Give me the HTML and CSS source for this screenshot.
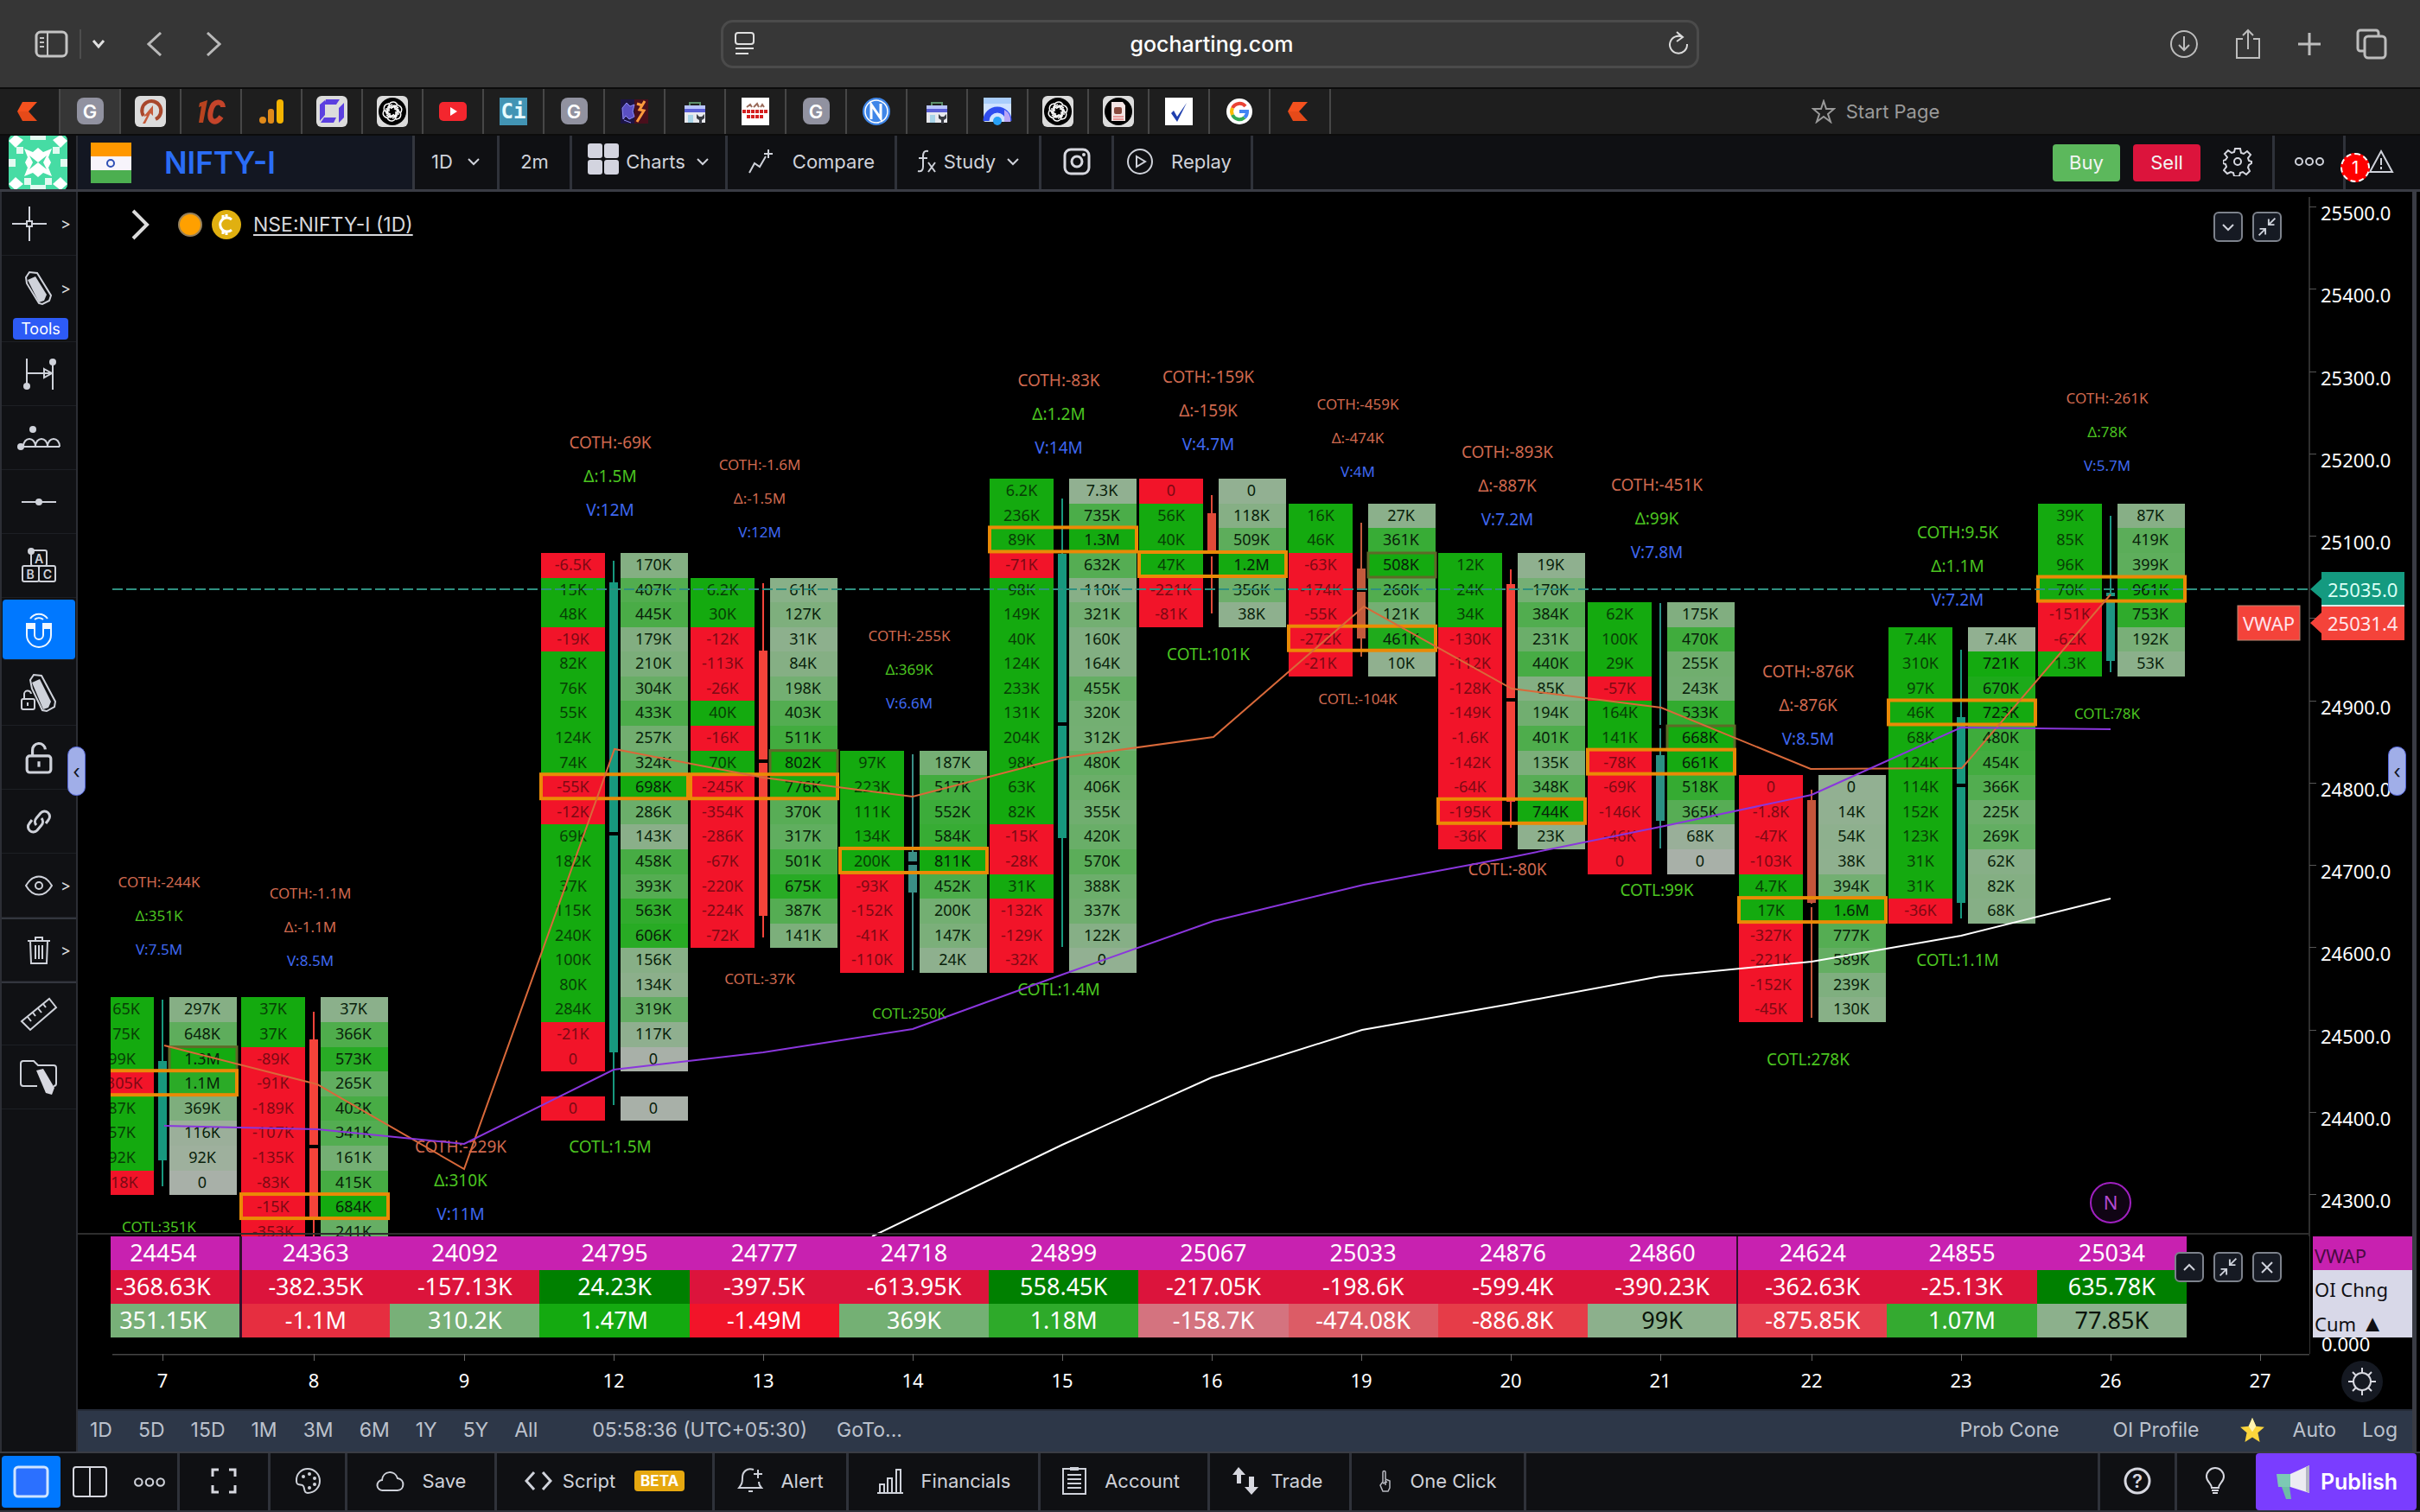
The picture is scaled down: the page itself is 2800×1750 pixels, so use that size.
FILE: index.html
```html
<!DOCTYPE html>
<html lang="en">
<head>
<meta charset="utf-8">
<title>NIFTY-I footprint chart</title>
<link rel="stylesheet" href="styles.css">
</head>
<body>
<svg class="defs" aria-hidden="true">
  <symbol id="i-kite" viewBox="0 0 36 36"><path d="M10 7h17L17 18H4z" fill="#f4511e"/><path d="M4 18h13l10 11H10z" fill="#e64a19"/></symbol>
  <symbol id="i-g" viewBox="0 0 36 36"><rect x="3" y="2" width="31" height="31" rx="8" fill="#9192a0"/><text x="18" y="26" text-anchor="middle" font-size="22" font-weight="600" fill="#fff">G</text></symbol>
  <symbol id="i-ai" viewBox="0 0 36 36"><rect width="36" height="36" rx="6" fill="#dcdcdc"/><circle cx="18" cy="18" r="16" fill="#000"/><g fill="none" stroke="#fff" stroke-width="1.5"><path id="petal" d="M14 18v-6a5 5 0 0 1 9-3l1 1M14 14l6-3 5 3"/><use href="#petal" transform="rotate(60 18 18)"/><use href="#petal" transform="rotate(120 18 18)"/><use href="#petal" transform="rotate(180 18 18)"/><use href="#petal" transform="rotate(240 18 18)"/><use href="#petal" transform="rotate(300 18 18)"/></g></symbol>
  <symbol id="i-box" viewBox="0 0 36 36"><path d="M12 11V8h12v3" fill="none" stroke="#5d8f6a" stroke-width="2"/><rect x="6" y="11" width="24" height="5" fill="#b9c4ff"/><path d="M6 15h24v16H6z" fill="#e8e9ee"/><path d="M6 15h24v4H6z" fill="#5b5fd6"/><path d="M10 22h6v9h-6z" fill="#a8d4e8"/><path d="M20 21v5l3 2v4h3v-4l3-2v-5l-3 3h-3z" fill="#3a3d45"/></symbol>
  <symbol id="i-min" viewBox="0 0 34 35"><path d="M27 7L19 15m0-7v7h7M7 28l8-8m-7 0h7v7" fill="none" stroke="#cfd3dc" stroke-width="2"/></symbol>
  <symbol id="i-chev" viewBox="0 0 16 12"><path d="M2 3l6 6 6-6" fill="none" stroke="#cfd2da" stroke-width="2"/></symbol>
  <symbol id="i-more" viewBox="0 0 36 14"><g fill="none" stroke="#cfd2da" stroke-width="2"><circle cx="6" cy="7" r="4"/><circle cx="18" cy="7" r="4"/><circle cx="30" cy="7" r="4"/></g></symbol>
  <symbol id="i-pen" viewBox="0 0 44 44"><path d="M7 9l4-6 9 1 16 26-2 6-8 4-4-1L8 16z" fill="none" stroke="#cfd2da" stroke-width="2"/><path d="M9 12l9-4 13 21-3 7-6 2z" fill="#cfd2da"/></symbol>
  <symbol id="i-lock" viewBox="0 0 32 36"><path d="M9 16v-6a7 7 0 0 1 14-1" fill="none" stroke="#cfd2da" stroke-width="3"/><rect x="3" y="16" width="26" height="18" rx="3" fill="none" stroke="#cfd2da" stroke-width="3"/><path d="M16 22v6" stroke="#cfd2da" stroke-width="3"/></symbol>
</svg>

<header class="browser-bar">
  <div class="browser-nav">
    <button class="plain" aria-label="Sidebar"><svg width="40" height="34" viewBox="0 0 40 34"><g fill="none" stroke="#c4c4c4" stroke-width="3"><rect x="2" y="3" width="35" height="28" rx="5"/><path d="M15 3v28M6 10h5M6 15h5M6 20h5" stroke-width="2"/></g></svg></button>
    <span class="nav-rule"></span>
    <button class="plain" aria-label="Tab groups"><svg width="16" height="12" viewBox="0 0 16 12"><path d="M2 2l6 7 6-7" fill="none" stroke="#e0e0e0" stroke-width="3"/></svg></button>
    <button class="plain back" aria-label="Back"><svg width="18" height="28" viewBox="0 0 18 28"><path d="M16 1L2 14l14 13" fill="none" stroke="#b9b9b9" stroke-width="3"/></svg></button>
    <button class="plain fwd" aria-label="Forward"><svg width="18" height="28" viewBox="0 0 18 28"><path d="M2 1l14 13L2 27" fill="none" stroke="#b9b9b9" stroke-width="3"/></svg></button>
  </div>
  <div class="address">
    <svg width="26" height="30" viewBox="0 0 26 30"><g fill="none" stroke="#e0e0e0" stroke-width="2"><rect x="2" y="2" width="21" height="13" rx="3"/><path d="M2 20h21M2 26h15"/></g></svg>
    <input type="text" value="gocharting.com" aria-label="Address">
    <button class="plain" aria-label="Reload"><svg width="26" height="30" viewBox="0 0 26 30"><path d="M18 7a10 10 0 1 0 5 8M11 1l7 6-7 5" fill="none" stroke="#dcdcdc" stroke-width="2"/></svg></button>
  </div>
  <div class="browser-actions">
    <button class="plain" aria-label="Downloads"><svg width="36" height="36" viewBox="0 0 36 36"><g fill="none" stroke="#bdbdbd" stroke-width="2"><circle cx="18" cy="18" r="15"/><path d="M18 9v16m-6-6l6 6 6-6"/></g></svg></button>
    <button class="plain" aria-label="Share"><svg width="36" height="40" viewBox="0 0 36 40"><g fill="none" stroke="#bdbdbd" stroke-width="2"><path d="M12 14H5v22h26V14h-7M18 26V4m-6 6l6-6 6 6"/></g></svg></button>
    <button class="plain" aria-label="New tab"><svg width="30" height="30" viewBox="0 0 30 30"><path d="M15 2v26M2 15h26" stroke="#bdbdbd" stroke-width="3"/></svg></button>
    <button class="plain" aria-label="Tab overview"><svg width="38" height="38" viewBox="0 0 38 38"><g fill="none" stroke="#bdbdbd" stroke-width="3"><path d="M11 27H6a3 3 0 0 1-3-3V6a3 3 0 0 1 3-3h18a3 3 0 0 1 3 3v4"/><rect x="11" y="10" width="24" height="25" rx="4"/></g></svg></button>
  </div>
</header>

<nav class="tabs">
  <a href="#" aria-label="Kite"><svg><use href="#i-kite"/></svg></a>
  <a href="#" class="current" aria-label="GoCharting"><svg><use href="#i-g"/></svg></a>
  <a href="#" aria-label="Tab"><svg viewBox="0 0 36 36"><rect width="36" height="36" rx="6" fill="#dcdcdc"/><path d="M10 23a11 11 0 1 1 14 4" fill="none" stroke="#a8472c" stroke-width="4"/><path d="M9 32l5-9-4 1 11-13v12l-3-3-6 12z" fill="#c65a3a"/></svg></a>
  <a href="#" aria-label="Tab"><svg viewBox="0 0 36 36"><path d="M5 8l9-3-5 26H4l3-19-3 1z" fill="#b8431f"/><path d="M32 13c0-7-11-9-14 4s5 17 12 7" fill="none" stroke="#c4442a" stroke-width="6"/></svg></a>
  <a href="#" aria-label="Analytics"><svg viewBox="0 0 36 36"><rect x="24" y="4" width="8" height="28" rx="4" fill="#f4b400"/><rect x="14" y="15" width="7" height="17" rx="3" fill="#e08a1a"/><circle cx="8" cy="28" r="4" fill="#e08a1a"/></svg></a>
  <a href="#" aria-label="Tab"><svg viewBox="0 0 36 36"><rect width="36" height="36" rx="6" fill="#dcdcdc"/><path d="M11 4h16l-4 6H9zM4 10l6-5v17l-6 7zM26 14l6-6v17l-6 6zM9 25h14l-3 6H5z" fill="#5b3fe0"/></svg></a>
  <a href="#" aria-label="ChatGPT"><svg><use href="#i-ai"/></svg></a>
  <a href="#" aria-label="YouTube"><svg viewBox="0 0 36 36"><rect x="2" y="7" width="32" height="22" rx="5" fill="#f4262e"/><path d="M15 13l8 5-8 5z" fill="#fff"/></svg></a>
  <a href="#" aria-label="Tab"><svg viewBox="0 0 36 36"><rect x="2" y="2" width="32" height="32" fill="#4294b4"/><text class="mono" x="18" y="26" text-anchor="middle" font-size="24" font-weight="700" fill="#e8fbff">Ci</text></svg></a>
  <a href="#" aria-label="GoCharting"><svg><use href="#i-g"/></svg></a>
  <a href="#" aria-label="Tab"><svg viewBox="0 0 36 36"><rect x="2" y="4" width="32" height="28" fill="#1c1445"/><rect x="18" y="4" width="16" height="28" fill="#4a0f1c"/><path d="M4 14l5-6 4 4 5-2-2 8 2 6-6 3-4-4-3 4zM6 28l8 3" stroke="#8f8cf5" fill="#5a4fc4"/><path d="M30 6l-6 10 5 1-8 13M21 9l6 2" fill="none" stroke="#ff9a3c" stroke-width="3"/></svg></a>
  <a href="#" aria-label="Toolbox"><svg><use href="#i-box"/></svg></a>
  <a href="#" aria-label="Tab"><svg viewBox="0 0 36 36"><rect x="2" y="2" width="32" height="32" fill="#fff"/><path d="M8 13l4-3 2 3M16 13l4-4 2 4M24 13l2-3 2 3" fill="none" stroke="#9a6a5a" stroke-width="2"/><path d="M3 18h30M8 24h20" stroke="#d42020" stroke-width="4" stroke-dasharray="4 1"/></svg></a>
  <a href="#" aria-label="GoCharting"><svg><use href="#i-g"/></svg></a>
  <a href="#" aria-label="Tab"><svg viewBox="0 0 36 36"><circle cx="18" cy="18" r="16" fill="#3f86e8"/><circle cx="18" cy="18" r="13" fill="none" stroke="#fff" stroke-width="1.5"/><path d="M12 27V10l11 16V9" fill="none" stroke="#fff" stroke-width="3"/></svg></a>
  <a href="#" aria-label="Toolbox"><svg><use href="#i-box"/></svg></a>
  <a href="#" aria-label="Tab"><svg viewBox="0 0 36 36"><rect x="2" y="2" width="32" height="28" rx="2" fill="#cfe2ff"/><path d="M2 2h32v7H2z" fill="#a9cdfb"/><path d="M5 29a13 13 0 0 1 26 0" fill="none" stroke="#2f4df0" stroke-width="7"/><path d="M26 16a14 14 0 0 1 7 14h-7z" fill="#b9a6f5"/><circle cx="18" cy="29" r="5" fill="#27a0f5"/></svg></a>
  <a href="#" aria-label="ChatGPT"><svg><use href="#i-ai"/></svg></a>
  <a href="#" aria-label="Tab"><svg viewBox="0 0 36 36"><rect width="36" height="36" rx="6" fill="#dcdcdc"/><circle cx="18" cy="18" r="16" fill="#000"/><path d="M10 7h13l3 4v18H10z" fill="#f3e4e4"/><rect x="13" y="13" width="9" height="8" rx="2" fill="#8a4a3e"/><path d="M12 24h12M12 27h12" stroke="#e05050"/></svg></a>
  <a href="#" aria-label="Tab"><svg viewBox="0 0 36 36"><rect x="2" y="2" width="32" height="32" fill="#fff"/><path d="M9 20l3-3 4 7L27 8 16 30z" fill="#1f3fae"/></svg></a>
  <a href="#" aria-label="Google"><svg viewBox="0 0 36 36"><circle cx="18" cy="18" r="15" fill="#fff"/><g fill="none" stroke-width="4"><path d="M10 14a9 9 0 0 1 15-2" stroke="#ea4335"/><path d="M10 22a9 9 0 0 1 0-8" stroke="#fbbc05"/><path d="M10 22a9 9 0 0 0 14 3" stroke="#34a853"/><path d="M24 25a9 9 0 0 0 3-7h-9" stroke="#4285f4"/></g></svg></a>
  <a href="#" aria-label="Kite"><svg><use href="#i-kite"/></svg></a>
  <a href="#" class="start"><svg viewBox="0 0 28 28"><path d="M14 2l3 9h9l-7 6 3 9-8-6-8 6 3-9-7-6h9z" fill="none" stroke="#9a9a9a" stroke-width="2"/></svg>Start Page</a>
</nav>

<div class="topbar">
  <div class="avatar"><svg width="68" height="64" viewBox="0 0 68 64"><rect width="68" height="64" rx="6" fill="#46dca4"/><g fill="#fff"><path d="M8 0l9 6-9 9-8-8zM60 0l8 7-8 8-9-9zM8 49l9 8-9 7-8-7zM60 49l8 8-8 7-9-7z"/><path d="M18 16l10 4 6-5 6 5 10-4-4 10 3 6-3 6 4 10-10-4-6 5-6-5-10 4 4-10-3-6 3-6z"/><path d="M25 0h18v6H25zM25 58h18v6H25zM0 28h8v9H0zM60 28h8v9h-8zM9 14h8v8H9zM51 14h8v8h-8zM18 50h8v8h-8zM42 50h8v8h-8z" opacity=".85"/></g><path d="M34 32l-10-8 4 8-4 8zM34 32l10-8-4 8 4 8z" fill="#46dca4"/></svg></div>
  <div class="symbol-cell">
    <svg width="47" height="47" viewBox="0 0 47 47"><path d="M0 0h47v16H0z" fill="#ff9800"/><path d="M0 16h47v16H0z" fill="#f7f4fb"/><path d="M0 32h47v15H0z" fill="#4caf50"/><circle cx="23" cy="24" r="4" fill="none" stroke="#2e4fb5" stroke-width="2"/></svg>
    <button class="symbol">NIFTY-I</button>
  </div>
  <button class="cell w98">1D <svg class="chev"><use href="#i-chev"/></svg></button>
  <button class="cell w84">2m</button>
  <button class="cell w180"><svg class="up" width="36" height="36" viewBox="0 0 36 36"><g fill="#d3d4df"><rect width="17" height="17" rx="3"/><rect x="19" width="17" height="17" rx="3"/><rect y="19" width="17" height="17" rx="3"/><rect x="19" y="19" width="17" height="17" rx="3"/></g></svg><span>Charts</span> <svg class="chev"><use href="#i-chev"/></svg></button>
  <button class="cell w196"><svg width="32" height="32" viewBox="0 0 32 32"><path d="M2 29l6-11 6 4 7-12M24 2v10M19 7h10" fill="none" stroke="#cfd2da" stroke-width="2"/></svg><span class="gap">Compare</span></button>
  <button class="cell w167"><svg width="24" height="28" viewBox="0 0 24 28"><path d="M14 2c-5-1-6 2-6 6v12c0 4-2 6-6 5M3 10h10M14 15l8 11M22 15l-8 11" fill="none" stroke="#cfd2da" stroke-width="2"/></svg><span>Study</span> <svg class="chev"><use href="#i-chev"/></svg></button>
  <button class="cell w84" aria-label="Snapshot"><svg width="34" height="34" viewBox="0 0 34 34"><g fill="none" stroke="#d7d8e0" stroke-width="3"><rect x="3" y="3" width="28" height="28" rx="7"/><circle cx="17" cy="17" r="6"/></g><circle cx="25" cy="9" r="2" fill="#d7d8e0"/></svg></button>
  <button class="cell w161"><svg width="32" height="32" viewBox="0 0 32 32"><circle cx="16" cy="16" r="14" fill="none" stroke="#cfd2da" stroke-width="2"/><path d="M12 10l10 6-10 6z" fill="none" stroke="#cfd2da" stroke-width="2"/></svg><span class="gap">Replay</span></button>
  <div class="spacer"></div>
  <button class="trade buy">Buy</button>
  <button class="trade sell">Sell</button>
  <button class="cell w84" aria-label="Settings"><svg width="34" height="34" viewBox="0 0 34 34"><g fill="none" stroke="#d7d8e0" stroke-width="2"><path d="M14 2h6l1 5 3 1 4-3 4 4-3 4 1 3 3 1v2l-3 2-1 3 2 4-4 4-4-3-3 1-1 4h-6l-1-4-3-1-4 2-4-4 3-4-1-3-3-1v-3l3-1 2-3-3-4 4-4 4 3 3-1z"/><circle cx="17" cy="17" r="4"/></g></svg></button>
  <button class="cell w82" aria-label="More"><svg width="36" height="14"><use href="#i-more"/></svg></button>
  <button class="cell w82 warn" aria-label="Warnings"><svg width="32" height="30" viewBox="0 0 32 30"><path d="M16 3l13 24H3z" fill="none" stroke="#cfd2da" stroke-width="2"/><path d="M16 11v8M16 21v3" stroke="#cfd2da" stroke-width="2"/></svg><b class="badge">1</b></button>
</div>

<main class="workspace">
  <aside class="rail">
    <button class="cursor" aria-label="Cursor"><svg width="40" height="40" viewBox="0 0 40 40"><path d="M0 20h16M24 20h16M20 0v16M20 24v16" stroke="#cfd2da" stroke-width="2"/><rect x="17" y="17" width="6" height="6" fill="none" stroke="#cfd2da" stroke-width="2"/></svg><i>&gt;</i></button>
    <button class="tall"><svg width="44" height="44"><use href="#i-pen"/></svg><i>&gt;</i><span class="tools">Tools</span></button>
    <button aria-label="Measure"><svg width="44" height="44" viewBox="0 0 44 44"><g stroke="#cfd2da" stroke-width="2" fill="none"><path d="M8 4v30M38 8v32M8 21h28M28 16l9 5-9 5z"/></g><circle cx="8" cy="36" r="4" fill="#cfd2da"/><circle cx="38" cy="8" r="4" fill="#cfd2da"/></svg></button>
    <button aria-label="Cycles"><svg width="52" height="32" viewBox="0 0 52 32"><path d="M6 26h44M8 26c0-12 14-12 14 0 0-12 14-12 14 0 0-12 14-12 14 0" fill="none" stroke="#cfd2da" stroke-width="2"/><circle cx="5" cy="26" r="4" fill="#cfd2da"/><circle cx="19" cy="6" r="4" fill="#cfd2da"/></svg></button>
    <button aria-label="Line"><svg width="40" height="12" viewBox="0 0 40 12"><path d="M0 6h40" stroke="#cfd2da" stroke-width="2"/><circle cx="20" cy="6" r="4" fill="#cfd2da"/></svg></button>
    <button aria-label="Text"><svg width="42" height="44" viewBox="0 0 42 44"><g fill="none" stroke="#cfd2da" stroke-width="2"><rect x="12" y="4" width="18" height="18" rx="2"/><rect x="2" y="22" width="19" height="18" rx="2"/><rect x="21" y="22" width="19" height="18" rx="2"/></g><circle cx="12" cy="5" r="4" fill="#cfd2da"/><g font-size="14" font-weight="600" fill="#cfd2da" text-anchor="middle"><text x="21" y="19">A</text><text x="11" y="37">B</text><text x="31" y="37">C</text></g></svg></button>
    <button class="on" aria-label="Magnet"><svg width="34" height="46" viewBox="0 0 34 46"><g fill="none" stroke="#eef6ff" stroke-width="2"><path d="M3 16v13a14 14 0 0 0 28 0V16h-9v13a5 5 0 0 1-10 0V16zM7 10a12 12 0 0 1 20 0M12 11a8 8 0 0 1 10 0"/></g><path d="M3 16h9v6H3zM22 16h9v6h-9z" fill="#eef6ff"/></svg></button>
    <button aria-label="Lock drawings"><svg width="44" height="48" viewBox="0 0 44 48"><path d="M12 8l4-6 9 1 16 30-1 6-9 5-5-1-12-25z" fill="none" stroke="#cfd2da" stroke-width="2"/><path d="M14 11l9-4 13 26-3 7-6 2z" fill="#cfd2da"/><path d="M5 30v-5a4 4 0 0 1 8-1" fill="none" stroke="#cfd2da" stroke-width="2"/><rect x="2" y="30" width="15" height="12" rx="2" fill="#101114" stroke="#cfd2da" stroke-width="2"/><path d="M9 34v4" stroke="#cfd2da" stroke-width="2"/></svg></button>
    <button aria-label="Lock"><svg width="34" height="42"><use href="#i-lock"/></svg></button>
    <button aria-label="Link"><svg width="32" height="32" viewBox="0 0 32 32"><g fill="none" stroke="#cfd2da" stroke-width="3"><path d="M13 20a6 6 0 0 1 0-8l5-6a6 6 0 0 1 9 8l-3 4"/><path d="M19 12a6 6 0 0 1 0 8l-5 6a6 6 0 0 1-9-8l3-4"/></g></svg></button>
    <button aria-label="Visibility"><svg width="34" height="28" viewBox="0 0 34 28"><path d="M2 14C10 0 24 0 32 14 24 28 10 28 2 14z" fill="none" stroke="#cfd2da" stroke-width="2"/><circle cx="17" cy="14" r="4" fill="none" stroke="#cfd2da" stroke-width="2"/></svg><i>&gt;</i></button>
    <button class="ruled" aria-label="Delete"><svg width="30" height="34" viewBox="0 0 30 34"><path d="M2 6h26M11 6V2h8v4M5 6l1 26h18l1-26M11 11v16M15 11v16M19 11v16" fill="none" stroke="#cfd2da" stroke-width="2"/></svg><i>&gt;</i></button>
    <button class="ruled" aria-label="Ruler"><svg width="44" height="44" viewBox="0 0 44 44"><path d="M2 30L34 4l8 10L12 40zM9 25l4 5M15 20l3 4M21 15l4 5M27 10l3 4" fill="none" stroke="#cfd2da" stroke-width="2"/></svg></button>
    <button aria-label="Templates"><svg width="44" height="44" viewBox="0 0 44 44"><path d="M20 32H4a3 3 0 0 1-3-3V6a3 3 0 0 1 3-3h12l5 5h18a3 3 0 0 1 3 3v18a3 3 0 0 1-3 3" fill="none" stroke="#cfd2da" stroke-width="2"/><path d="M19 14l8-2 13 22-3 8-7-2z" fill="#d7d8e0"/></svg></button>
  </aside>

  <section class="chart">
    <div class="pane">
      <svg id="footprint" viewBox="90 222 2701 1209" role="img" aria-label="Footprint chart"></svg>
      <div class="legend"><svg width="22" height="36" viewBox="0 0 22 36"><path d="M2 2l16 16L2 34" fill="none" stroke="#dcdcdc" stroke-width="4"/></svg><span class="dot"></span><svg class="coin" width="34" height="34" viewBox="0 0 34 34"><circle cx="17" cy="17" r="17" fill="#e0b010"/><path d="M23 11a8 8 0 1 0 0 12M17 5v5M17 24v5M13 6v4M13 24v4" fill="none" stroke="#fff" stroke-width="3"/></svg><a href="#">NSE:NIFTY-I (1D)</a></div>
      <div class="pane-tools top"><button aria-label="Collapse"><svg width="16" height="12"><use href="#i-chev"/></svg></button><button aria-label="Minimize"><svg width="32" height="33"><use href="#i-min"/></svg></button></div>
    </div>
    <div class="data-pane">
      <table>
        <colgroup><col class="first"><col span="13"></colgroup>
        <tr class="vwap"><td>24454</td><td>24363</td><td>24092</td><td>24795</td><td>24777</td><td>24718</td><td>24899</td><td>25067</td><td>25033</td><td>24876</td><td>24860</td><td>24624</td><td>24855</td><td>25034</td></tr>
        <tr class="oi"><td>-368.63K</td><td>-382.35K</td><td>-157.13K</td><td class="pos">24.23K</td><td>-397.5K</td><td>-613.95K</td><td class="pos">558.45K</td><td>-217.05K</td><td>-198.6K</td><td>-599.4K</td><td>-390.23K</td><td>-362.63K</td><td>-25.13K</td><td class="pos">635.78K</td></tr>
        <tr class="cum"><td style="background:#78b078">351.15K</td><td style="background:#e62e40">-1.1M</td><td style="background:#78b078">310.2K</td><td style="background:#14aa10">1.47M</td><td style="background:#f21429">-1.49M</td><td style="background:#74b074">369K</td><td style="background:#2eaa2a">1.18M</td><td style="background:#d4737f">-158.7K</td><td style="background:#dc5c66">-474.08K</td><td style="background:#e63c48">-886.8K</td><td class="dark" style="background:#8cb08c">99K</td><td style="background:#e63e4e">-875.85K</td><td style="background:#34aa30">1.07M</td><td class="dark" style="background:#8cb08c">77.85K</td></tr>
      </table>
      <div class="data-axis"><div class="k1">VWAP</div><div>OI Chng</div><div>Cum <span class="delta">▲</span></div><p>0.000</p></div>
      <div class="pane-tools mid"><button aria-label="Move up"><svg class="flip" width="16" height="12"><use href="#i-chev"/></svg></button><button aria-label="Minimize"><svg width="32" height="33"><use href="#i-min"/></svg></button><button aria-label="Close"><svg width="18" height="18" viewBox="0 0 18 18"><path d="M3 3l12 12M15 3L3 15" stroke="#cfd3dc" stroke-width="2"/></svg></button></div>
    </div>
    <div class="time-axis">
      <svg id="dates" viewBox="90 1567 2701 64" role="img" aria-label="Dates"></svg>
      <button class="theme" aria-label="Theme"><svg width="34" height="34" viewBox="0 0 34 34"><circle cx="17" cy="17" r="10" fill="none" stroke="#d7d8e0" stroke-width="2"/><path d="M17 1v6M17 27v6M1 17h6M27 17h6M6 6l4 4M24 24l4 4M6 28l4-4M24 10l4-4" stroke="#d7d8e0" stroke-width="2"/></svg></button>
    </div>
    <div class="ranges">
      <button>1D</button><button>5D</button><button>15D</button><button>1M</button><button>3M</button><button>6M</button><button>1Y</button><button>5Y</button><button>All</button>
      <button class="clock">05:58:36 (UTC+05:30)</button><button>GoTo...</button>
      <span class="spacer"></span>
      <button class="prob">Prob Cone</button><button>OI Profile</button>
      <svg width="30" height="30" viewBox="0 0 28 28"><path d="M14 1l4 9 9 1-7 6 2 10-8-5-8 5 2-10-7-6 9-1z" fill="#fbd53c"/><path d="M14 1l4 9-4 6-4-6z" fill="#fff3b0"/></svg>
      <button>Auto</button><button>Log</button>
    </div>
    <button class="handle left" aria-label="Collapse tools">&#x2039;</button>
    <button class="handle right" aria-label="Open panel">&#x2039;</button>
  </section>
</main>

<footer class="bottombar">
  <div class="layouts">
    <button class="active" aria-label="Single layout"><svg width="42" height="38" viewBox="0 0 42 38"><rect x="2" y="2" width="38" height="34" rx="4" fill="#2b70ff" stroke="#cfe4ff" stroke-width="3"/></svg></button>
    <button class="plain" aria-label="Split layout"><svg width="42" height="38" viewBox="0 0 42 38"><path d="M21 2v34" stroke="#d7d8e0" stroke-width="2"/><rect x="2" y="2" width="38" height="34" rx="3" fill="none" stroke="#d7d8e0" stroke-width="2"/></svg></button>
    <button class="plain" aria-label="More layouts"><svg width="38" height="15"><use href="#i-more"/></svg></button>
  </div>
  <button class="cell w105" aria-label="Fullscreen"><svg width="30" height="30" viewBox="0 0 30 30"><path d="M2 10V2h7M21 2h7v8M28 20v8h-7M9 28H2v-8" fill="none" stroke="#d7d8e0" stroke-width="3"/></svg></button>
  <button class="cell w89" aria-label="Palette"><svg width="32" height="32" viewBox="0 0 32 32"><path d="M16 2a14 14 0 0 1 0 28c-5 0-3-5-5-8s-8 1-8-6A13 13 0 0 1 16 2z" fill="none" stroke="#cfd2da" stroke-width="2"/><g fill="#cfd2da"><circle cx="11" cy="11" r="2"/><circle cx="18" cy="8" r="2"/><circle cx="24" cy="13" r="2"/><circle cx="24" cy="20" r="2"/><circle cx="18" cy="24" r="2"/></g></svg></button>
  <button class="cell w173"><svg width="34" height="28" viewBox="0 0 34 28"><path d="M8 25a6 6 0 0 1-1-12C8 2 22 1 25 11c9 1 8 14 0 14z" fill="none" stroke="#cfd2da" stroke-width="2"/></svg><span class="gap">Save</span></button>
  <button class="cell w252"><svg width="32" height="24" viewBox="0 0 32 24"><path d="M11 2L2 12l9 10M21 2l9 10-9 10" fill="none" stroke="#cfd2da" stroke-width="3"/></svg><span>Script</span><b class="beta">BETA</b></button>
  <button class="cell w155"><svg width="30" height="32" viewBox="0 0 30 32"><path d="M19 3c-8-3-13 3-13 9 0 7-1 8-4 12h26c-2-2-3-4-3-7M13 28h5M24 3v10M19 8h10" fill="none" stroke="#cfd2da" stroke-width="2"/></svg><span class="gap">Alert</span></button>
  <button class="cell w222"><svg width="32" height="32" viewBox="0 0 32 32"><path d="M1 30h30M4 30V20h5v10M13 30V13h5v17M23 30V3h5v27" fill="none" stroke="#cfd2da" stroke-width="2"/></svg><span class="gap">Financials</span></button>
  <button class="cell w196"><svg width="30" height="34" viewBox="0 0 30 34"><path d="M2 3h26v29H2zM7 10h16M7 15h16M7 20h16M7 25h16" fill="none" stroke="#cfd2da" stroke-width="2"/><path d="M10 1h10v4H10z" fill="#cfd2da"/></svg><span class="gap">Account</span></button>
  <button class="cell w164"><svg width="36" height="36" viewBox="0 0 36 36"><path d="M10 2l8 9h-5v10H8V11H3zM25 34l-8-9h5V13h6v12h5z" fill="#d7d8e0"/></svg><span>Trade</span></button>
  <button class="cell w202"><svg width="16" height="26" viewBox="0 0 16 26"><path d="M5 14V3a1 1 0 0 1 3 0v8l5 2v8l-2 4H5l-3-7zM8 12v6M5 16l5-2" fill="none" stroke="#b9bbc2" stroke-width="1.5"/></svg><span class="gap">One Click</span></button>
  <div class="spacer ruled-right"></div>
  <button class="cell w89" aria-label="Help"><svg width="34" height="34" viewBox="0 0 34 34"><circle cx="17" cy="17" r="14" fill="none" stroke="#d7d8e0" stroke-width="3"/><text x="17" y="25" text-anchor="middle" font-size="22" font-weight="600" fill="#d7d8e0">?</text></svg></button>
  <button class="cell w91 bare" aria-label="Ideas"><svg width="26" height="32" viewBox="0 0 26 32"><path d="M9 24c0-5-6-7-6-13a10 10 0 0 1 20 0c0 6-6 8-6 13zM9 27h8M10 30h6" fill="none" stroke="#d7d8e0" stroke-width="2"/></svg></button>
  <button class="publish"><svg width="42" height="42" viewBox="0 0 42 42"><path d="M2 12h16v15H4z" fill="#7cc9b4"/><path d="M18 12L40 2v32L18 27z" fill="#ececf2"/><path d="M36 4l4-2v32l-4-2z" fill="#b3b6c4"/><path d="M8 27h9l2 14h-6z" fill="#6dbda6"/></svg>Publish</button>
</footer>
<script src="chart.js"></script>
</body>
</html>
```
FILE: styles.css
```css
* { box-sizing: border-box; }
body {
  margin: 0;
  min-height: 100vh;
  display: flex;
  flex-direction: column;
  background: #000;
  color: #cfd2da;
  font-family: Inter, "Liberation Sans", sans-serif;
  font-size: 22px;
  line-height: 28px;
}
button { font: inherit; color: inherit; border: 0; background: none; padding: 0; cursor: pointer; }
svg { display: block; flex: none; }
.defs { display: none; }
.mono { font-family: "DejaVu Sans Mono", monospace; }
.plain { display: flex; align-items: center; }
.spacer { flex: 1; }

/* Browser chrome */
.browser-bar { display: grid; grid-template-columns: 1fr 1132px 1fr; height: 101px; background: #363636; align-items: center; }
.browser-nav { display: flex; align-items: center; gap: 12px; padding-left: 40px; }
.nav-rule { width: 2px; height: 34px; background: #4d4d4d; }
.back { margin-left: 36px; }
.fwd { margin-left: 38px; }
.address { display: flex; align-items: center; gap: 12px; height: 56px; padding: 0 8px 0 12px; border: 3px solid #4b4b4b; border-radius: 14px; background: #373737; }
.address input { flex: 1; min-width: 0; border: 0; background: none; color: #fff; font: 500 25px/32px Inter, sans-serif; text-align: center; outline: 0; }
.browser-actions { display: flex; align-items: center; justify-content: flex-end; gap: 38px; padding-right: 37px; }

.tabs { display: flex; height: 56px; background: #1e1e1e; border-top: 2px solid #0c0c0c; border-bottom: 2px solid #0c0c0c; }
.tabs a { flex: 0 0 70px; display: flex; align-items: center; justify-content: center; border-right: 2px solid #474747; color: #9a9a9a; text-decoration: none; }
.tabs a svg { width: 36px; height: 36px; }
.tabs .current { background: #363636; }
.tabs .start { flex: 1; gap: 12px; border: 0; }
.tabs .start svg { width: 28px; height: 28px; }

/* App toolbar */
.topbar { display: flex; align-items: center; height: 65px; padding-right: 4px; background: #0f1013; border-bottom: 3px solid #3a3c44; overflow: hidden; }
.avatar { width: 90px; height: 65px; padding-left: 10px; border-right: 2px solid #2c2e35; }
.symbol-cell { display: flex; align-items: center; gap: 38px; width: 390px; height: 62px; padding-left: 15px; background: #131722; border-right: 3px solid #33363e; }
.symbol { font-size: 35px; font-weight: 600; color: #2a6df6; }
.cell { display: flex; align-items: center; justify-content: center; gap: 12px; height: 100%; border-right: 3px solid #2f323a; background: #0f1013; white-space: nowrap; flex: none; }
.topbar .cell, .bottombar .cell { padding-bottom: 2px; }
.cell .gap { padding-left: 8px; }
.chev { width: 16px; height: 12px; margin-left: 4px; }
.w82 { width: 82px; } .w84 { width: 84px; } .w89 { width: 89px; } .w91 { width: 91px; } .w98 { width: 98px; }
.w105 { width: 105px; } .w155 { width: 155px; } .w161 { width: 161px; } .w164 { width: 164px; }
.w167 { width: 167px; } .w173 { width: 173px; } .w180 { width: 180px; } .w196 { width: 196px; }
.w202 { width: 202px; } .w222 { width: 222px; } .w252 { width: 252px; }
.w180, .w167 { gap: 8px; }
.bottombar .w164, .topbar .w161, .bottombar .w196 { padding-right: 8px; }
.up { margin-bottom: 6px; }
.trade { height: 43px; width: 78px; border-radius: 4px; color: #f2f5f2; margin-right: 15px; }
.buy { background: #5cb85c; }
.sell { background: #dc143c; margin-right: 2px; }
.warn { position: relative; border: 0; }
.badge { position: absolute; left: -6px; top: 20px; width: 34px; height: 34px; border: 2px dashed #fff; border-radius: 50%; background: #f00; color: #fff; font-size: 20px; font-weight: 400; line-height: 30px; }

/* Workspace */
.workspace { flex: 1; display: flex; padding-right: 4px; }
.rail { flex: 0 0 90px; display: flex; flex-direction: column; background: #101114; border-left: 2px solid #2c2e35; border-right: 2px solid #2c2e35; }
.rail button { position: relative; height: 74px; display: flex; align-items: center; justify-content: center; border-bottom: 1px solid #1d1f24; }
.rail i { position: absolute; right: 6px; font-style: normal; font-size: 18px; color: #dcdcdc; }
.rail .cursor { padding-right: 22px; }
.rail .tall { height: 100px; padding-bottom: 24px; }
.tools { position: absolute; left: 13px; right: 9px; bottom: 2px; height: 25px; border-radius: 4px; background: #2d5bf6; color: #fff; font-size: 18px; line-height: 25px; }
.rail .on { background: #0078ff; border-radius: 4px; margin: 2px 1px; height: 70px; }
.rail .ruled { border-top: 2px solid #33363e; }
.chart { position: relative; flex: 1; min-width: 0; display: flex; flex-direction: column; border-right: 5px solid #3a3c44; }
.pane { position: relative; }
.pane > svg, .time-axis > svg { width: 100%; height: auto; font-family: "Noto Sans", "Open Sans", sans-serif; }
.legend { position: absolute; left: 62px; top: 20px; display: flex; align-items: center; font-size: 23px; }
.legend a { color: #d7d8dc; margin-left: 14px; text-underline-offset: 3px; text-decoration-thickness: 2px; }
.dot { width: 28px; height: 28px; margin: 0 11px 0 32px; border-radius: 50%; background: #ffa000; border: 2px solid #96805a; }
.pane-tools { position: absolute; display: flex; gap: 11px; }
.pane-tools button { width: 34px; height: 35px; display: flex; align-items: center; justify-content: center; border: 2px solid #7d828c; border-radius: 6px; background: #161a23; }
.pane-tools.top { right: 151px; top: 23px; }
.pane-tools.mid { right: 151px; top: 18px; }
.flip { transform: rotate(180deg); }

.data-pane { position: relative; display: flex; align-items: flex-start; height: 136px; padding-left: 38px; font-family: "Noto Sans", "Open Sans", sans-serif; }
.data-pane table { flex: none; width: calc(100% - 261px); margin-right: 142px; border-collapse: collapse; table-layout: fixed; color: #fff; font-size: 27px; }
.first { width: 150px; }
.data-pane td { height: 39px; padding: 0 0 2px; text-align: center; line-height: 34px; }
.data-pane td:first-child { padding-right: 27px; border-right: 3px solid #33102c; }
.data-pane td:nth-child(11) { border-right: 2px solid #33102c; }
.vwap td { background: #c821b0; }
.oi td { background: #dc143c; }
.oi .pos { background: #008000; }
.cum .dark { color: #0a140a; }
.data-axis { flex: 0 0 119px; height: 136px; padding-left: 3px; border-left: 1px solid #333; overflow: hidden; color: #101014; line-height: 34px; font-size: 22px; }
.data-axis div { height: 39px; padding: 5px 0 0 2px; background: #d8d8e8; }
.data-axis .k1 { background: #c821b0; color: #4a0a42; }
.delta { font-size: 27px; }
.data-axis p { margin: -4px 0 0 10px; color: #fff; line-height: 22px; }
.time-axis { position: relative; }
.theme { position: absolute; right: 34px; top: 8px; width: 48px; height: 48px; display: flex; align-items: center; justify-content: center; border-radius: 50%; background: #151922; }
.ranges { display: flex; align-items: center; gap: 30px; height: 49px; padding: 0 17px 3px 14px; background: #2d3748; border-top: 2px solid #252b38; color: #bcc2cd; font-size: 23px; }
.clock { margin: 0 4px 0 33px; }
.prob { margin-right: 32px; }
.ranges svg { margin: 0 2px 0 16px; }
.handle { position: absolute; top: 642px; width: 21px; height: 57px; border-radius: 10px; background: #a0aee8; border: 1px solid #5566d8; color: #101420; line-height: 50px; z-index: 1; }
.handle.left { left: -12px; }
.handle.right { right: 7px; }

/* Bottom bar */
.bottombar { display: flex; height: 70px; padding-right: 4px; background: #0f1013; border-top: 2px solid #3a3c44; border-bottom: 2px solid #2f323a; }
.layouts { display: flex; align-items: center; gap: 13px; width: 208px; padding-left: 2px; border-right: 3px solid #2f323a; }
.active { width: 68px; height: 60px; display: flex; align-items: center; justify-content: center; border-radius: 4px; background: #0078ff; }
.layouts .plain + .plain { margin-left: 16px; }
.beta { margin-left: 10px; padding: 0 7px; border-radius: 4px; background: #e6a810; color: #fff; font-size: 17px; line-height: 24px; }
.ruled-right { border-right: 3px solid #2f323a; }
.bare { border-color: #0f1013; }
.publish { display: flex; align-items: center; justify-content: center; gap: 11px; width: 186px; border-radius: 4px; background: #7a3dff; color: #fff; font-size: 25px; font-weight: 600; }
```
FILE: chart.js
```js
// Footprint columns: x = time position, k = first price row, rows = "delta volume", poc / hot = row indexes
const ROW = 28.58, TOP = 640;
const GREEN = [20, 170, 16], LOW = [146, 176, 146], GREY = [168, 176, 168];
const TEAL = '#17987e', RED = '#f4433a';
const cols = [
  { x: 188, k: 18, low: GREY, poc: 3, hot: 2, fs: 17, ty: 1020, top: ['-244K', '351K', '7.5M'], by: 1419, bot: '351K', wick: [1157, 1373], body: [1228, 1343], c: TEAL,
    rows: '165K 297K,175K 648K,99K 1.3M,-305K 1.1M,87K 369K,57K 116K,92K 92K,-18K 0' },
  { x: 363, k: 18, poc: 8, fs: 17, ty: 1033, top: ['-1.1M', '-1.1M', '8.5M'], wick: [1171, 1440], body: [1203, 1409], gap: 1327, c: RED,
    rows: '37K 37K,37K 366K,-89K 573K,-91K 265K,-189K 403K,-107K 341K,-135K 161K,-83K 415K,-15K 684K,-353K 241K' },
  { x: 537, fs: 19, ty: 1327, top: ['-229K', '310K', '11M'] },
  { x: 710, k: 0, low: GREY, poc: 9, fs: 19, ty: 512, top: ['-69K', '1.5M', '12M'], by: 1327, bot: '1.5M', wick: [649, 1279], body: [674, 1218], gap: 965, c: TEAL,
    rows: '-6.5K 170K,15K 407K,48K 445K,-19K 179K,82K 210K,76K 304K,55K 433K,124K 257K,74K 324K,-55K 698K,-12K 286K,69K 143K,182K 458K,37K 393K,115K 563K,240K 606K,100K 156K,80K 134K,284K 319K,-21K 117K,0 0,,0 0' },
  { x: 883, k: 1, poc: 8, hot: 7, fs: 17, ty: 537, top: ['-1.6M', '-1.5M', '12M'], by: 1132, bot: '-37K', wick: [675, 1085], body: [753, 1060], gap: 881, c: RED,
    rows: '6.2K 61K,30K 127K,-12K 31K,-113K 84K,-26K 198K,40K 403K,-16K 511K,70K 802K,-245K 776K,-354K 370K,-286K 317K,-67K 501K,-220K 675K,-224K 387K,-72K 141K' },
  { x: 1056, k: 8, poc: 4, fs: 17, ty: 735, top: ['-255K', '369K', '6.6M'], by: 1172, bot: '250K', wick: [873, 1123], body: [986, 1033], gap: 999, c: '#3a8f86',
    rows: '97K 187K,223K 517K,111K 552K,134K 584K,200K 811K,-93K 452K,-152K 200K,-41K 147K,-110K 24K' },
  { x: 1229, k: -3, poc: 2, fs: 19, ty: 440, top: ['-83K', '1.2M', '14M'], by: 1145, bot: '1.4M', wick: [577, 1096], body: [641, 970], gap: 838, c: TEAL,
    rows: '6.2K 7.3K,236K 735K,89K 1.3M,-71K 632K,98K 110K,149K 321K,40K 160K,124K 164K,233K 455K,131K 320K,204K 312K,98K 480K,63K 406K,82K 355K,-15K 420K,-28K 570K,31K 388K,-132K 337K,-129K 122K,-32K 0' },
  { x: 1402, k: -3, poc: 3, fs: 19, ty: 436, top: ['-159K', '-159K', '4.7M'], by: 757, bot: '101K', wick: [573, 710], body: [594, 639], gap: 642, c: '#e04a38',
    rows: '0 0,56K 118K,40K 509K,47K 1.2M,-221K 356K,-81K 38K' },
  { x: 1575, k: -2, poc: 5, hot: 2, fs: 17, ty: 467, top: ['-459K', '-474K', '4M'], by: 808, bot: '-104K', wick: [605, 760], body: [658, 739], gap: 683, c: '#c25a3c',
    rows: '16K 27K,46K 361K,-63K 508K,-174K 260K,-55K 121K,-272K 461K,-21K 10K' },
  { x: 1748, k: 0, poc: 10, fs: 19, ty: 523, top: ['-893K', '-887K', '7.2M'], by: 1006, bot: '-80K', wick: [659, 958], body: [676, 928], gap: 810, c: RED,
    rows: '12K 19K,24K 170K,34K 384K,-130K 231K,-112K 440K,-128K 85K,-149K 194K,-1.6K 401K,-142K 135K,-64K 348K,-195K 744K,-36K 23K' },
  { x: 1921, k: 2, low: GREY, poc: 6, hot: 5, fs: 19, ty: 561, top: ['-451K', '99K', '7.8M'], by: 1030, bot: '99K', wick: [698, 982], body: [874, 950], gap: 841, c: '#2a9084',
    rows: '62K 175K,100K 470K,29K 255K,-57K 243K,164K 533K,141K 668K,-78K 661K,-69K 518K,-146K 365K,-46K 68K,0 0' },
  { x: 2096, k: 9, poc: 5, fs: 19, ty: 777, top: ['-876K', '-876K', '8.5M'], by: 1226, bot: '278K', wick: [914, 1178], body: [926, 1045], gap: 1048, c: '#c4553a',
    rows: '0 0,-1.8K 14K,-47K 54K,-103K 38K,4.7K 394K,17K 1.6M,-327K 777K,-221K 589K,-152K 239K,-45K 130K' },
  { x: 2269, k: 3, poc: 3, fs: 19, ty: 616, top: ['9.5K', '1.1M', '7.2M'], by: 1111, bot: '1.1M', wick: [752, 1063], body: [830, 1045], gap: 909, c: TEAL,
    rows: '7.4K 7.4K,310K 721K,97K 670K,46K 723K,68K 480K,124K 454K,114K 366K,152K 225K,123K 269K,31K 62K,31K 82K,-36K 68K' },
  { x: 2442, k: -2, poc: 3, fs: 17, ty: 460, top: ['-261K', '78K', '5.7M'], by: 825, bot: '78K', wick: [597, 778], body: [686, 765], gap: 692, c: '#1d9582',
    rows: '39K 87K,85K 419K,96K 399K,70K 961K,-151K 753K,-62K 192K,1.3K 53K' }
];
const num = s => parseFloat(s) * (s.endsWith('M') ? 1e6 : s.endsWith('K') ? 1e3 : 1);
const rect = (x, y, w, h, f) => `<rect x="${x}" y="${y}" width="${w}" height="${h}" fill="${f}"/>`;
const text = (x, y, s, f, size, a = 'middle') => `<text x="${x}" y="${y}" font-size="${size}" fill="${f}" text-anchor="${a}">${s}</text>`;
const box = (x, y, w, h, c, sw) => `<rect x="${x}" y="${y}" width="${w}" height="${h}" fill="none" stroke="${c}" stroke-width="${sw}"/>`;
const line = (pts, c, w) => `<polyline points="${pts}" fill="none" stroke="${c}" stroke-width="${w}"/>`;
const signed = s => s.startsWith('-') ? '#d0694f' : '#4bc420';
const NEG = '#f21429', POS = '#14aa0f';

let cells = '', candles = '', labels = '', boxes = '';
for (const c of cols) {
  ['COTH:', 'Δ:', 'V:'].forEach((p, i) => {
    labels += text(c.x - 4, c.ty + i * 39 + 7, p + c.top[i], i === 2 ? '#3f68f0' : signed(c.top[i]), c.fs);
  });
  if (!c.rows) continue;
  if (c.bot) labels += text(c.x - 4, c.by + 7, 'COTL:' + c.bot, signed(c.bot), c.fs);
  const rows = c.rows.split(',').map(r => r.split(' '));
  const max = Math.max(...rows.filter(r => r[1]).map(r => num(r[1])));
  const low = c.low || LOW;
  rows.forEach(([d, v], i) => {
    if (!v) return;
    const y = Math.round(TOP + (c.k + i) * ROW), h = Math.round(TOP + (c.k + i + 1) * ROW) - y;
    const t = num(v) / max;
    const shade = low.map((a, j) => Math.round(a + (GREEN[j] - a) * t));
    const red = d[0] === '-' || d === '0';
    cells += rect(c.x - 84, y, 74, h, red ? NEG : POS) + rect(c.x + 8, y, 78, h, `rgb(${shade})`);
    cells += text(c.x - 47, y + 20, d, red ? '#7d0914' : '#073f05', 18) + text(c.x + 46, y + 20, v, '#08210a', 18);
  });
  const y = TOP + (c.k + c.poc) * ROW;
  if (c.hot !== undefined) boxes += box(c.x + 8, TOP + (c.k + c.hot) * ROW, 78, 28, '#5e6a28', 3);
  boxes += box(c.x - 84, y - 1, 170, 28, '#ea8a06', 4);
  candles += rect(c.x - 1, c.wick[0], 2, c.wick[1] - c.wick[0], c.c) + rect(c.x - 5, c.body[0], 10, c.body[1] - c.body[0], c.c);
  if (c.gap) candles += rect(c.x - 5, c.gap - 2, 10, 4, '#000');
}

let axis = '<path d="M2672 228V1431M90 1428H2672" stroke="#2e2e2e" stroke-width="2"/>';
for (let p = 25500; p >= 24300; p -= 100) {
  const y = Math.round(239 + (25500 - p) * 0.9526);
  axis += rect(2672, y, 8, 1, '#555');
  if (p !== 25000) axis += text(2685, y + 16, p + '.0', '#fff', 22, 'start');
}
axis += `<path d="M130 682H2674" stroke="#2f9080" stroke-width="2" stroke-dasharray="12 4"/>
<path d="M2673 682l13-12v-8h96v39h-96v-8z" fill="#149a80"/><path d="M2673 721l13-12v-8h96v40h-96v-8z" fill="${RED}"/>
<path d="M2686 701h96" stroke="#d8ece8" stroke-width="2"/><rect x="2589" y="701" width="72" height="40" fill="${RED}" stroke="#b98a74" stroke-width="1"/>`;
axis += text(2693, 691, '25035.0', '#d9fff4', 22, 'start') + text(2693, 730, '25031.4', '#ffe6ea', 22, 'start') + text(2625, 730, 'VWAP', '#ffe2ea', 22);

document.getElementById('footprint').innerHTML =
  '<clipPath id="plot"><rect x="128" y="222" width="2544" height="1209"/></clipPath>' +
  `<g clip-path="url(#plot)">${cells}${candles}${boxes}${labels}` +
  line('190,1210 367,1255 537,1353 711,867 883,900 1056,922 1229,877 1404,853 1578,702 1749,797 1922,819 2095,890 2270,889 2442,688', '#d9693a', 2) +
  line('190,1303 367,1307 537,1324 710,1238 883,1218 1056,1191 1229,1128 1404,1066 1578,1024 1749,992 1921,957 2096,920 2269,842 2442,844', '#8a36dc', 2) +
  line('1009,1431 1229,1325 1402,1247 1576,1192 1748,1162 1921,1130 2096,1113 2269,1083 2442,1040', '#fff', 2) +
  '<circle cx="2442" cy="1392" r="23" fill="#100414" stroke="#a020c0" stroke-width="2"/>' + text(2442, 1400, 'N', '#b44ad0', 22) +
  '</g>' + axis;

const days = [7, 8, 9, 12, 13, 14, 15, 16, 19, 20, 21, 22, 23, 26, 27];
document.getElementById('dates').innerHTML = '<path d="M130 1567.5H2672" stroke="#444" stroke-width="2"/>' +
  days.map((d, i) => {
    const x = i < 14 ? cols[i].x : 2615;
    return rect(x, 1567, 1, 8, '#666') + text(x, 1606, d, '#fff', 22);
  }).join('');
```
